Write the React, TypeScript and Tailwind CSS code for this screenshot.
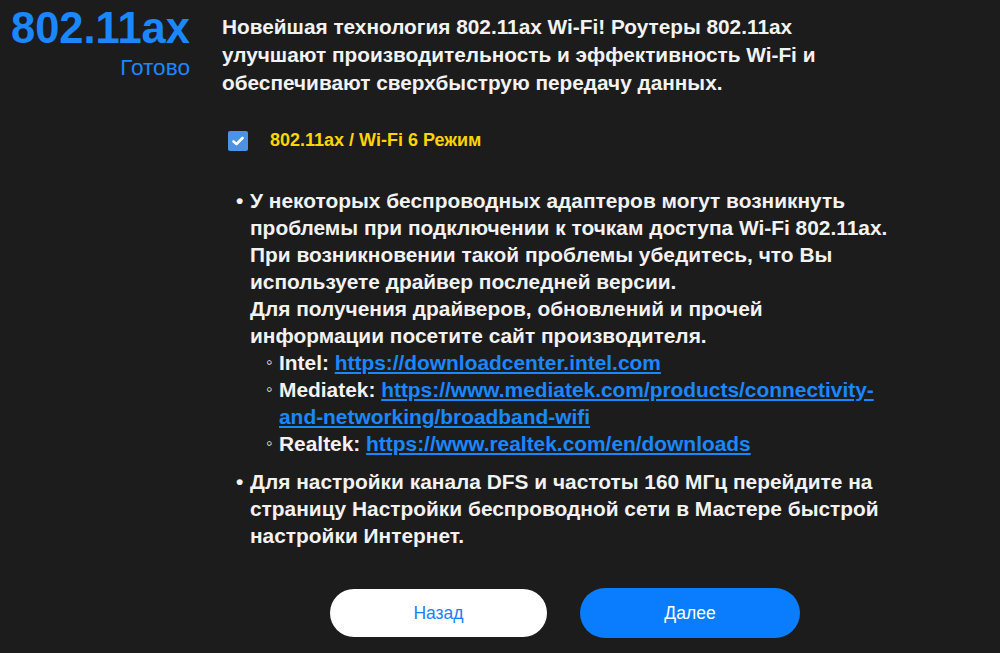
import React from "react";

export default function App() {
  const font = { fontFamily: '"Liberation Sans", Arial, sans-serif' };
  return (
    <div
      className="w-[1000px] h-[653px] overflow-hidden bg-[#1c1c1d] text-[#f2f2f2] flex"
      style={font}
    >
      <div className="w-[190px] shrink-0 flex flex-col items-end pt-[4px]">
        <div className="text-[43.5px] font-bold leading-[48px] text-[#1a87ff]">802.11ax</div>
        <div className="text-[22.6px] leading-[26px] text-[#1a87ff] mt-[3px]">Готово</div>
      </div>
      <div className="ml-[32px] w-[673px] flex flex-col">
        <p className="mt-[13px] w-[640px] text-[20.8px] font-bold leading-[28px]">
          Новейшая технология 802.11ax Wi-Fi! Роутеры 802.11ax улучшают производительность и эффективность Wi-Fi и обеспечивают сверхбыструю передачу данных.
        </p>
        <div className="mt-[30px] flex items-center ml-[6px]">
          <div className="w-[20px] h-[20px] bg-[#4b93e6] rounded-[2px] flex items-center justify-center">
            <svg width="12" height="10" viewBox="0 0 12 10">
              <path d="M1.5 5.5 L4.5 8 L10.5 2" stroke="#fff" strokeWidth="2.6" fill="none" strokeLinecap="round" strokeLinejoin="round" />
            </svg>
          </div>
          <span className="ml-[22px] text-[18px] font-bold text-[#ffd400]">802.11ax / Wi-Fi 6 Режим</span>
        </div>
        <ul className="mt-[33px] ml-[14px] text-[20.9px] font-bold leading-[27px]">
          <li className="flex">
            <span className="w-[14px] shrink-0">•</span>
            <div>
              <div>
                У некоторых беспроводных адаптеров могут возникнуть проблемы при подключении к точкам доступа Wi-Fi 802.11ax. При возникновении такой проблемы убедитесь, что Вы используете драйвер последней версии.
              </div>
              <div>
                Для получения драйверов, обновлений и прочей информации посетите сайт производителя.
              </div>
              <ul className="ml-[16px]">
                <li className="flex">
                  <span className="w-[13px] shrink-0 text-[18px] leading-[27px]">◦</span>
                  <div>
                    Intel:{" "}
                    <a className="text-[#1a87ff] underline" href="#">https://downloadcenter.intel.com</a>
                  </div>
                </li>
                <li className="flex">
                  <span className="w-[13px] shrink-0 text-[18px] leading-[27px]">◦</span>
                  <div>
                    Mediatek:{" "}
                    <a className="text-[#1a87ff] underline" href="#">https://www.mediatek.com/products/connectivity-and-networking/broadband-wifi</a>
                  </div>
                </li>
                <li className="flex">
                  <span className="w-[13px] shrink-0 text-[18px] leading-[27px]">◦</span>
                  <div>
                    Realtek:{" "}
                    <a className="text-[#1a87ff] underline" href="#">https://www.realtek.com/en/downloads</a>
                  </div>
                </li>
              </ul>
            </div>
          </li>
          <li className="flex mt-[11px]">
            <span className="w-[14px] shrink-0">•</span>
            <div>
              Для настройки канала DFS и частоты 160 МГц перейдите на страницу Настройки беспроводной сети в Мастере быстрой настройки Интернет.
            </div>
          </li>
        </ul>
        <div className="mt-[40px] flex gap-[33px] ml-[108px]">
          <button className="w-[217px] h-[48px] rounded-full bg-white text-[#1a7fff] text-[17.5px]">Назад</button>
          <button className="w-[220px] h-[50px] -mt-[1px] rounded-full bg-[#0a7dff] text-white text-[17.5px]">Далее</button>
        </div>
      </div>
    </div>
  );
}
